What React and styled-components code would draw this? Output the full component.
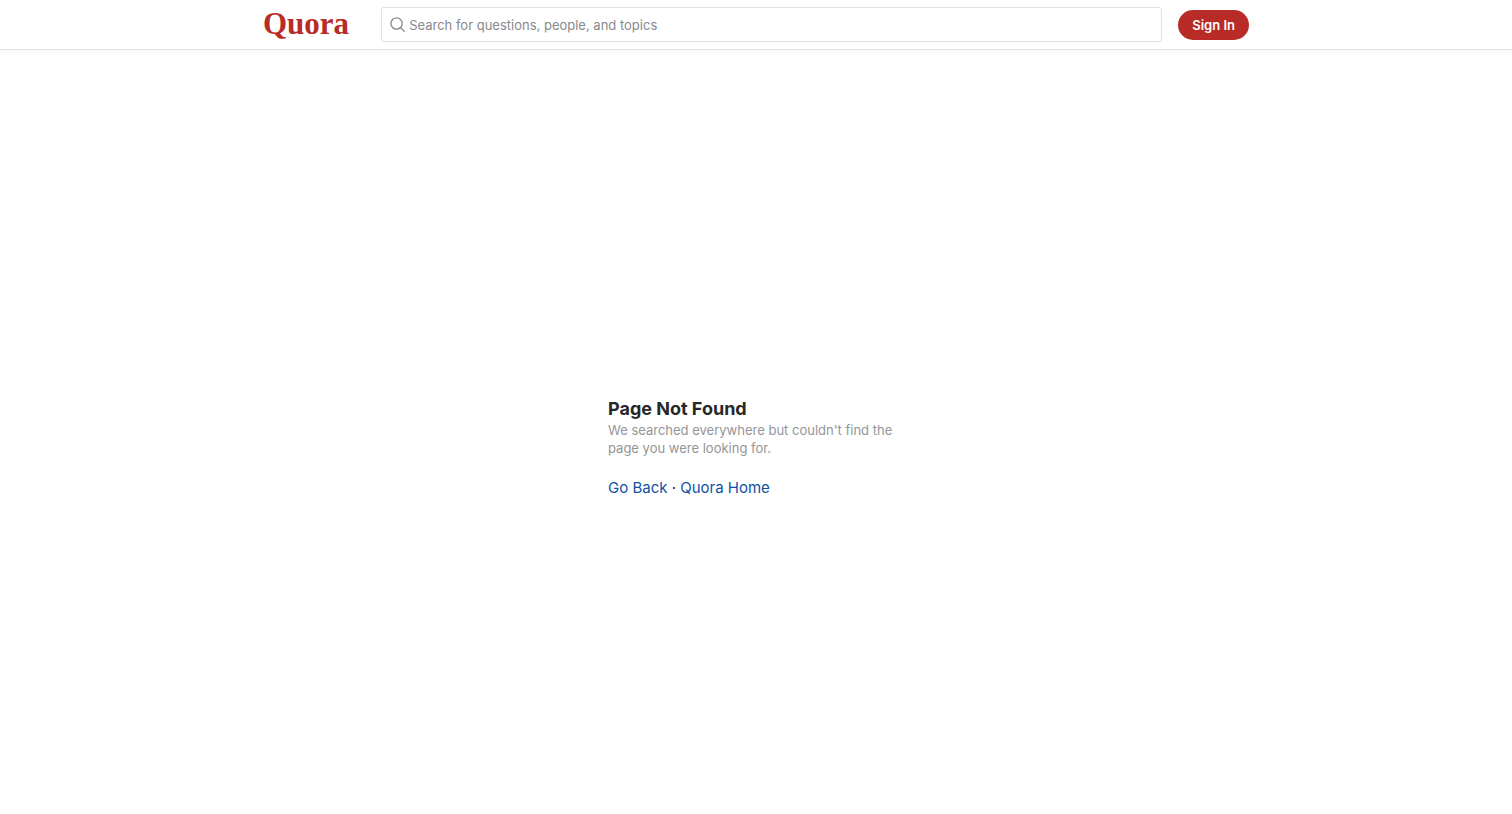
import styled, { createGlobalStyle } from 'styled-components';

const links = [
  { label: 'Go Back', url: '#back' },
  { label: 'Quora Home', url: '#home' },
];

const App = () => {
  return (
    <>
      <GlobalStyle />
      <Page>
        <Header>
          <HeaderInner>
            <Logo href="#home">Quora</Logo>
            <SearchBox>
              <SearchIcon viewBox="0 0 16 16" aria-hidden="true">
                <circle cx="7" cy="7" r="6" />
                <path d="M11.4 11.4l3.8 3.8" />
              </SearchIcon>
              <SearchInput
                type="text"
                aria-label="Search"
                placeholder="Search for questions, people, and topics"
              />
            </SearchBox>
            <SignIn type="button">Sign In</SignIn>
          </HeaderInner>
        </Header>
        <Main>
          <Message>
            <Title>Page Not Found</Title>
            <Description>
              We searched everywhere but couldn't find the page you were looking for.
            </Description>
            <Links>
              {links.map((link, index) => (
                <span key={link.label}>
                  {index > 0 && ' · '}
                  <TextLink href={link.url}>{link.label}</TextLink>
                </span>
              ))}
            </Links>
          </Message>
        </Main>
      </Page>
    </>
  );
};

export default App;

const GlobalStyle = createGlobalStyle`
  * {
    box-sizing: border-box;
  }

  body {
    margin: 0;
    background-color: #fff;
    color: #282829;
    font-family: Inter, 'Liberation Sans', sans-serif;
  }
`;

const Page = styled.div`
  min-height: 100vh;
  display: flex;
  flex-direction: column;
`;

const Header = styled.header`
  height: 50px;
  border-bottom: 1px solid #dee0e1;
  box-shadow: 0 3px 6px rgba(0, 0, 0, 0.04);
`;

const HeaderInner = styled.div`
  max-width: 986px;
  height: 100%;
  margin: 0 auto;
  display: flex;
  align-items: center;
`;

const Logo = styled.a`
  margin-right: 32px;
  padding-bottom: 2px;
  color: #b92b27;
  font-family: 'Liberation Serif', serif;
  font-size: 31px;
  font-weight: 700;
  line-height: 36px;
  text-decoration: none;
`;

const SearchBox = styled.div`
  flex: 1;
  height: 35px;
  margin-right: 16px;
  padding: 0 8px;
  display: flex;
  align-items: center;
  gap: 4px;
  border: 1px solid #dee0e1;
  border-radius: 3px;

  &:focus-within {
    border-color: #2e69ff;
  }
`;

const SearchIcon = styled.svg`
  width: 15px;
  height: 15px;
  fill: none;
  stroke: #87898c;
  stroke-width: 1.4;
  stroke-linecap: round;
`;

const SearchInput = styled.input`
  flex: 1;
  min-width: 0;
  padding: 0;
  border: 0;
  outline: none;
  background: none;
  color: #282829;
  font-family: inherit;
  font-size: 13px;
  line-height: 18px;

  &::placeholder {
    color: #87898c;
    opacity: 1;
  }
`;

const SignIn = styled.button`
  height: 30px;
  padding: 0 14px;
  border: 0;
  border-radius: 15px;
  background-color: #b92b27;
  color: #fff;
  font-family: inherit;
  font-size: 13px;
  font-weight: 600;
  cursor: pointer;
`;

const Main = styled.main`
  flex: 1;
  display: flex;
  align-items: center;
  justify-content: center;
`;

const Message = styled.div`
  width: 296px;
  margin-top: 30px;
`;

const Title = styled.h1`
  margin: 0;
  color: #282829;
  font-size: 18px;
  font-weight: 700;
  line-height: 24px;
`;

const Description = styled.p`
  margin: 0 0 21px;
  color: #939598;
  font-size: 13px;
  line-height: 18px;
`;

const Links = styled.nav`
  font-size: 15px;
  line-height: 20px;
`;

const TextLink = styled.a`
  color: #0f52a5;
  text-decoration: none;

  &:hover {
    text-decoration: underline;
  }
`;
